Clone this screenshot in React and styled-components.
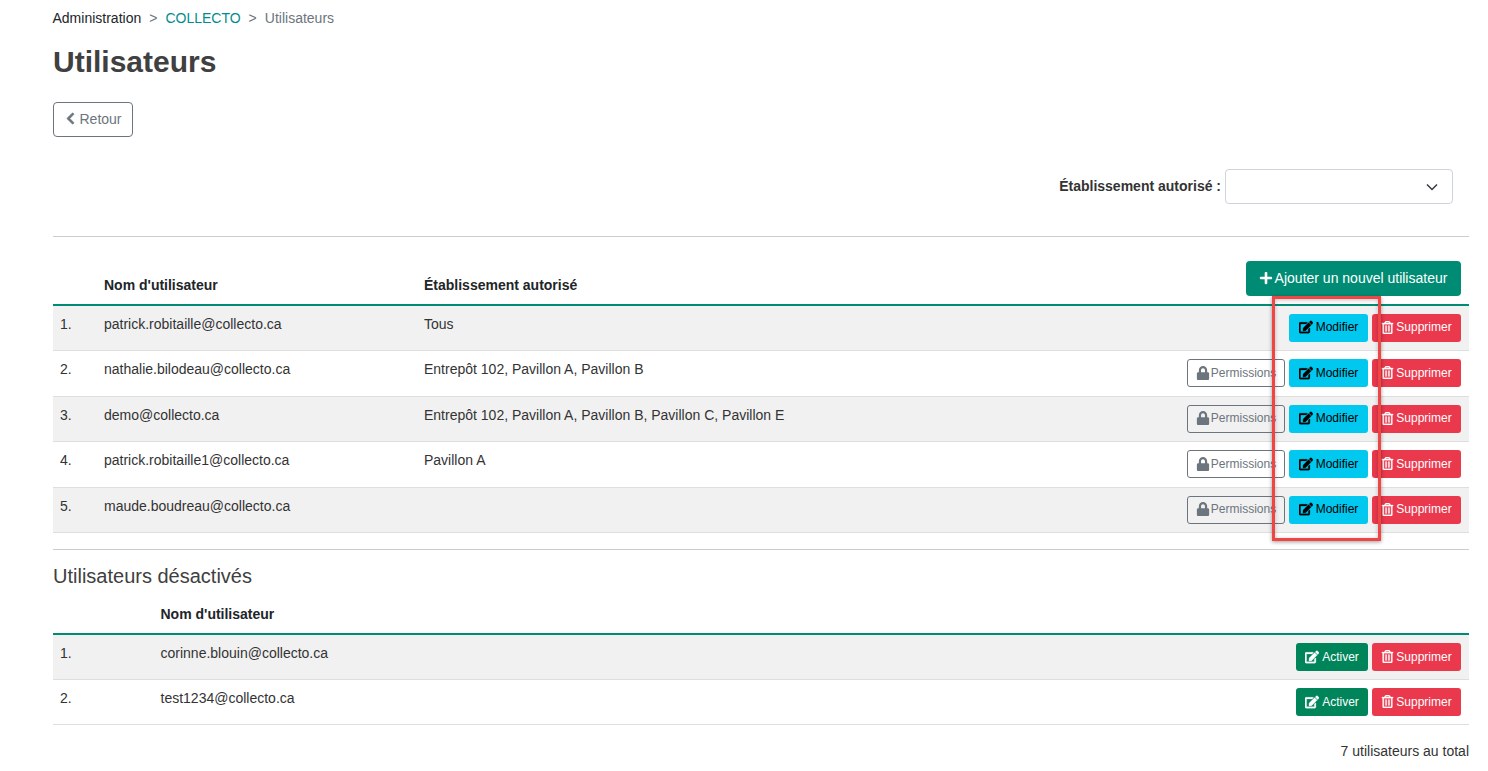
import React from "react";
import styled, { createGlobalStyle } from "styled-components";
import { FaChevronLeft, FaPlus, FaLock, FaEdit, FaRegTrashAlt } from "react-icons/fa";

const GlobalStyle = createGlobalStyle`
  html, body {
    margin: 0;
    padding: 0;
    background: #fff;
    font-family: "Liberation Sans", Arial, sans-serif;
    font-size: 14px;
    color: #333;
  }
`;

const Page = styled.div`
  position: relative;
  width: 1416px;
  height: 771px;
  padding-left: 53px;
  overflow: hidden;
`;

const Breadcrumb = styled.div`
  display: flex;
  align-items: center;
  height: 16px;
  padding-top: 10px;
  margin-left: -0.5px;
  font-size: 14px;
  line-height: 16px;
`;

const Crumb = styled.span`
  color: ${props => props.color || "#212529"};
`;

const Sep = styled.span`
  color: #6c757d;
  margin: 0 8px;
`;

const Title = styled.h1`
  margin: 18px 0 0;
  font-size: 30px;
  line-height: 36px;
  font-weight: 700;
  color: #404040;
`;

const BackButton = styled.button`
  display: flex;
  align-items: center;
  justify-content: center;
  gap: 2px;
  width: 80px;
  height: 35px;
  margin-top: 22px;
  padding: 0 0 2px;
  background: #fff;
  border: 1px solid #6c757d;
  border-radius: 4px;
  color: #6c757d;
  font: inherit;
  svg {
    font-size: 13px;
    stroke: currentColor;
    stroke-width: 30px;
  }
`;

const FilterBar = styled.div`
  display: flex;
  justify-content: flex-end;
  align-items: center;
  gap: 4px;
  margin-top: 32px;
  padding-right: 16px;
`;

const FilterLabel = styled.label`
  padding-bottom: 2px;
  font-weight: 700;
  color: #333;
`;

const Select = styled.div`
  box-sizing: border-box;
  display: flex;
  align-items: center;
  justify-content: flex-end;
  width: 228px;
  height: 35px;
  padding-right: 14px;
  border: 1px solid #ced4da;
  border-radius: 4px;
  background: #fff;
`;

const Rule = styled.hr`
  margin: ${props => props.$margin};
  border: 0;
  border-top: 1px solid #ccc;
`;

const HeaderRow = styled.div`
  box-sizing: border-box;
  display: grid;
  grid-template-columns: ${props => props.$columns};
  align-items: end;
  height: ${props => props.$height};
  border-bottom: 2px solid #008c74;
  font-weight: 700;
  color: #212529;
`;

const HeaderAction = styled.div`
  display: flex;
  justify-content: flex-end;
  padding: 0 8px 8px 0;
`;

const HeaderCell = styled.div`
  padding-bottom: 11px;
  line-height: 16px;
`;

const AddButton = styled.button`
  display: flex;
  align-items: center;
  justify-content: center;
  gap: 2px;
  width: 215px;
  height: 35px;
  padding: 0 1px 1px 0;
  border: 0;
  border-radius: 4px;
  background: #008c74;
  color: #fff;
  font-family: inherit;
  font-size: 14px;
  font-weight: 400;
  svg {
    font-size: 14px;
  }
`;

const Row = styled.div`
  box-sizing: border-box;
  display: grid;
  grid-template-columns: ${props => props.$columns};
  height: ${props => props.$height};
  border-bottom: 1px solid #dedede;
  background: ${props => (props.$striped ? "#f1f1f1" : "#fff")};
  color: #333;
`;

const Cell = styled.div`
  padding-top: 10px;
  line-height: 16px;
`;

const NumCell = styled(Cell)`
  padding-left: 7px;
`;

const Actions = styled.div`
  display: flex;
  justify-content: flex-end;
  align-items: flex-start;
  gap: 4px;
  padding: 8px 8px 0 0;
`;

const ActionButton = styled.button`
  box-sizing: border-box;
  display: flex;
  align-items: center;
  justify-content: center;
  gap: ${props => props.$gap || "2px"};
  width: ${props => props.$width};
  height: 28px;
  padding: 0 0 1px;
  border: ${props => (props.$outline ? "1px solid #6c757d" : "0")};
  border-radius: 3px;
  background: ${props => props.$bg};
  color: ${props => props.$color};
  font: inherit;
  font-size: 12px;
  svg {
    font-size: ${props => props.$icon || "13px"};
    stroke: currentColor;
    stroke-width: ${props => props.$iconStroke || 0};
    flex: none;
  }
`;

const SectionTitle = styled.h2`
  margin: 14px 0 0;
  font-size: 20px;
  line-height: 24px;
  font-weight: 400;
  color: #404040;
`;

const Total = styled.div`
  margin-top: 18px;
  text-align: right;
  line-height: 16px;
  color: #333;
`;

// annotation drawn over the screenshot
const Highlight = styled.div`
  box-sizing: border-box;
  position: absolute;
  left: 1272px;
  top: 296px;
  width: 109px;
  height: 245px;
  border: 3px solid #f04545;
  box-shadow: 0 1px 4px rgba(0, 0, 0, 0.4), inset 0 1px 4px rgba(0, 0, 0, 0.25);
  pointer-events: none;
`;

const COLS = "51px 320px 1fr auto";
const COLS_OFF = "107.5px 1fr auto";

const users = [
  { mail: "patrick.robitaille@collecto.ca", place: "Tous", perms: false },
  { mail: "nathalie.bilodeau@collecto.ca", place: "Entrepôt 102, Pavillon A, Pavillon B", perms: true },
  { mail: "demo@collecto.ca", place: "Entrepôt 102, Pavillon A, Pavillon B, Pavillon C, Pavillon E", perms: true },
  { mail: "patrick.robitaille1@collecto.ca", place: "Pavillon A", perms: true },
  { mail: "maude.boudreau@collecto.ca", place: "", perms: true }
];

const disabledUsers = ["corinne.blouin@collecto.ca", "test1234@collecto.ca"];

const DeleteButton = () => (
  <ActionButton $width="89px" $bg="#ea384d" $color="#fff" $iconStroke="12px">
    <FaRegTrashAlt />
    Supprimer
  </ActionButton>
);

export default function App() {
  return (
    <Page>
      <GlobalStyle />
      <Breadcrumb>
        <Crumb>Administration</Crumb>
        <Sep>&gt;</Sep>
        <Crumb color="#008c8c">COLLECTO</Crumb>
        <Sep>&gt;</Sep>
        <Crumb color="#6c757d">Utilisateurs</Crumb>
      </Breadcrumb>
      <Title>Utilisateurs</Title>
      <BackButton>
        <FaChevronLeft />
        Retour
      </BackButton>

      <FilterBar>
        <FilterLabel>Établissement autorisé :</FilterLabel>
        <Select>
          <svg width="12" height="8" viewBox="0 0 12 8" fill="none" stroke="#343a40" strokeWidth="1.5">
            <path d="M1 1.5l5 5 5-5" />
          </svg>
        </Select>
      </FilterBar>

      <Rule $margin="32px 0 0" />

      <HeaderRow $columns={COLS} $height="68.5px">
        <div />
        <HeaderCell>Nom d'utilisateur</HeaderCell>
        <HeaderCell>Établissement autorisé</HeaderCell>
        <HeaderAction>
          <AddButton>
            <FaPlus />
            Ajouter un nouvel utilisateur
          </AddButton>
        </HeaderAction>
      </HeaderRow>

      {users.map((user, i) => (
        <Row key={user.mail} $columns={COLS} $height="45.5px" $striped={i % 2 === 0}>
          <NumCell>{i + 1}.</NumCell>
          <Cell>{user.mail}</Cell>
          <Cell>{user.place}</Cell>
          <Actions>
            {user.perms && (
              <ActionButton $width="98px" $outline $bg="transparent" $color="#6c757d" $gap="1px" $icon="14px">
                <FaLock />
                Permissions
              </ActionButton>
            )}
            <ActionButton $width="79px" $bg="#00c8ef" $color="#000" $icon="14px" $gap="3px" $iconStroke="12px">
              <FaEdit />
              Modifier
            </ActionButton>
            <DeleteButton />
          </Actions>
        </Row>
      ))}

      <Rule $margin="16px 0 0" />
      <SectionTitle>Utilisateurs désactivés</SectionTitle>

      <HeaderRow $columns={COLS_OFF} $height="47px">
        <div />
        <HeaderCell>Nom d'utilisateur</HeaderCell>
      </HeaderRow>

      {disabledUsers.map((mail, i) => (
        <Row key={mail} $columns={COLS_OFF} $height="45px" $striped={i % 2 === 0}>
          <NumCell>{i + 1}.</NumCell>
          <Cell>{mail}</Cell>
          <Actions>
            <ActionButton $width="72px" $bg="#00855a" $color="#fff" $icon="14px" $gap="3px" $iconStroke="12px">
              <FaEdit />
              Activer
            </ActionButton>
            <DeleteButton />
          </Actions>
        </Row>
      ))}

      <Total>7 utilisateurs au total</Total>
      <Highlight />
    </Page>
  );
}
